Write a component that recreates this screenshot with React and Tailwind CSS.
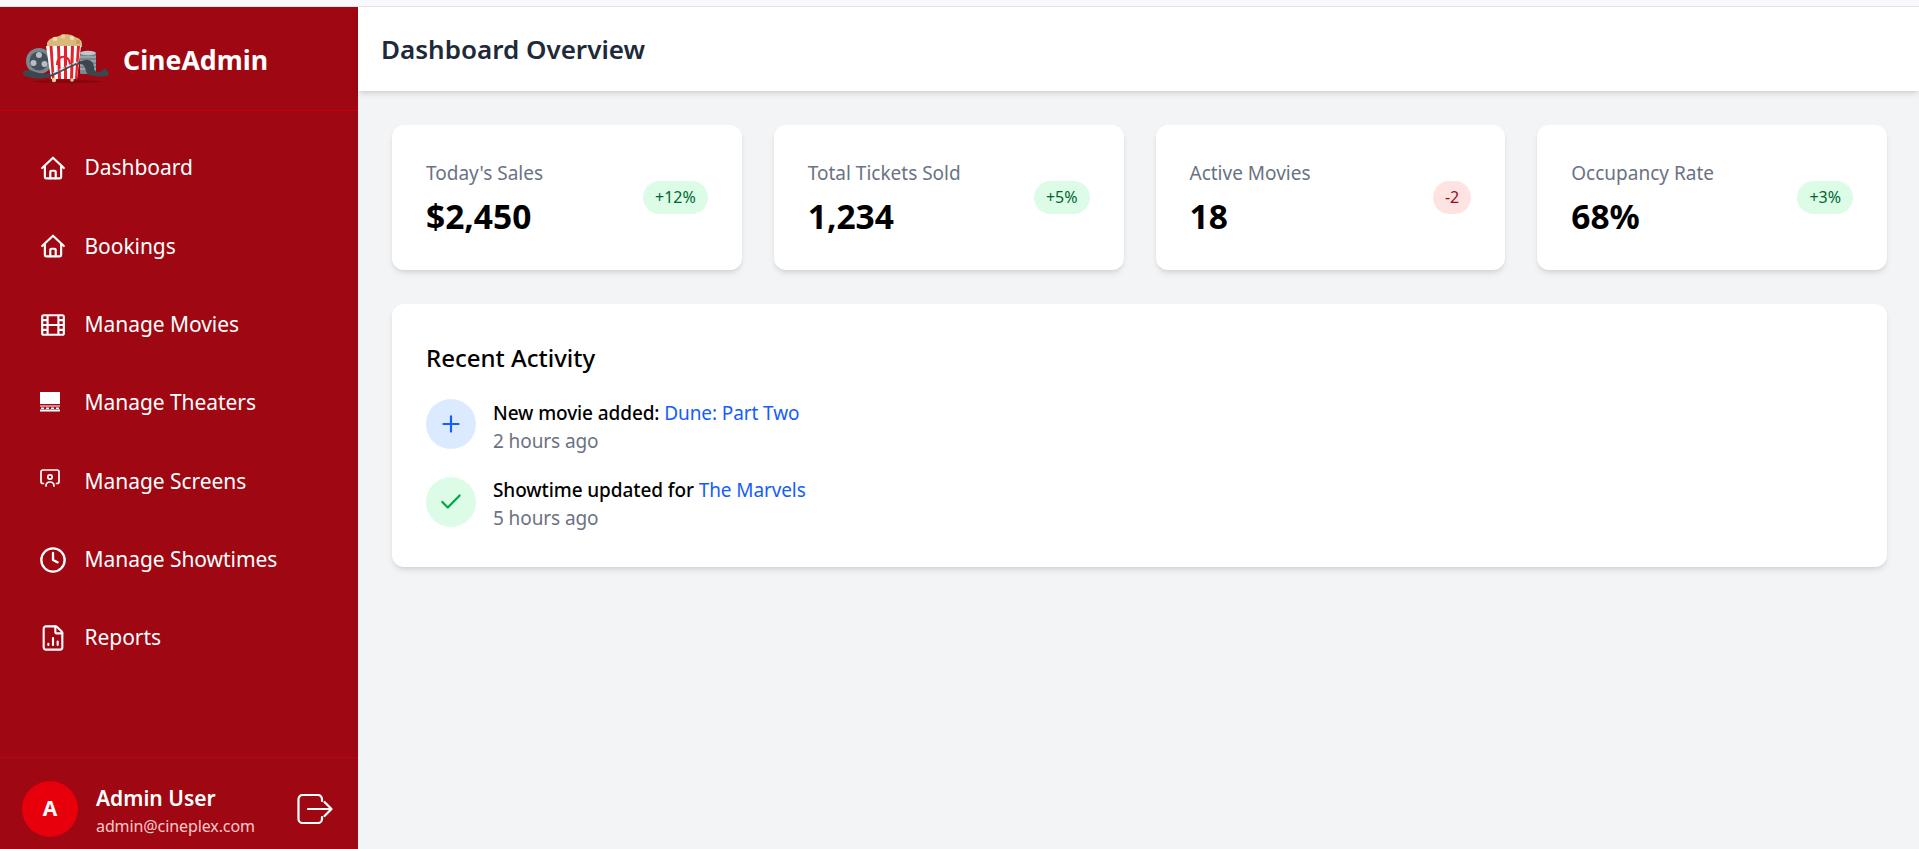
import { Clock, FileChartColumn, Plus, Check } from 'lucide-react';

const font = { fontFamily: '"Noto Sans", "Open Sans", sans-serif' };

const HomeIcon = () => (
  <svg viewBox="0 0 24 24" className="w-[26px] h-[26px]" fill="none" stroke="currentColor" strokeWidth="2" strokeLinecap="round" strokeLinejoin="round">
    <path d="M2 12 12 2.5 22 12" />
    <path d="M4.5 10v10a1.5 1.5 0 0 0 1.5 1.5h12a1.5 1.5 0 0 0 1.5-1.5V10" />
    <path d="M9.5 21.5V15.5a1 1 0 0 1 1-1h3a1 1 0 0 1 1 1v6" />
  </svg>
);

const FilmIcon = () => (
  <svg viewBox="0 0 24 24" className="w-[26px] h-[26px]" fill="none" stroke="currentColor" strokeWidth="2" strokeLinejoin="round">
    <rect x="2" y="3" width="20" height="18" rx="1.5" />
    <path d="M7 3v18M17 3v18M7 12h10M2 7.5h5M2 12h5M2 16.5h5M17 7.5h5M17 12h5M17 16.5h5" />
  </svg>
);

const TheaterIcon = () => (
  <svg viewBox="3 -2 26 26" className="w-[26px] h-[26px]" fill="white">
    <rect x="3" y="0" width="20" height="12" />
    <rect x="3" y="13.5" width="20" height="1" />
    <path d="M4 15.5h3v1.5H4zM9 15.5h3v1.5H9zM14 15.5h3v1.5h-3zM19 15.5h3v1.5h-3z" />
    <rect x="3" y="17.5" width="20" height="2" />
  </svg>
);

const ScreenIcon = () => (
  <svg viewBox="3 0 26 26" className="w-[26px] h-[26px]" fill="none" stroke="currentColor" strokeWidth="1.7" strokeLinecap="round" strokeLinejoin="round">
    <path d="M6.500 15.500H6a2 2 0 0 1-2-2V4a2 2 0 0 1 2-2h14a2 2 0 0 1 2 2v9.500a2 2 0 0 1-2 2h-.5" />
    <circle cx="13" cy="9" r="2.200" />
    <path d="M9 18c0-2.600 1.600-4 4-4s4 1.400 4 4" />
  </svg>
);

const LogoutIcon = () => (
  <svg viewBox="0 0 36 30" className="w-9 h-[30px] shrink-0" fill="none" stroke="currentColor" strokeWidth="2.2" strokeLinecap="round" strokeLinejoin="round">
    <path d="M25 7V5a4 4 0 0 0-4-4H5.500a4 4 0 0 0-4 4v20a4 4 0 0 0 4 4H21a4 4 0 0 0 4-4v-2" />
    <path d="M11 15h23.500M27.500 8l7 7-7 7" />
  </svg>
);

// small picture of a film reel, popcorn box and film strip
const Logo = () => (
  <svg viewBox="0 0 88 50" className="w-[88px] h-[50px] shrink-0">
    <ellipse cx="45" cy="47.500" rx="34" ry="1.500" fill="#85060f" />
    <circle cx="17" cy="27" r="13" fill="#7b868f" />
    <circle cx="17" cy="27" r="9.500" fill="#465058" />
    <circle cx="17" cy="21" r="3" fill="#b6bfc7" />
    <circle cx="11.500" cy="29" r="3" fill="#b6bfc7" />
    <circle cx="22.500" cy="30" r="3" fill="#b6bfc7" />
    <rect x="58" y="19" width="16" height="21" rx="1.500" fill="#7b868f" />
    <path d="M58 23h16M58 27h16M58 31h16M58 35h16" stroke="#b6bfc7" strokeWidth="1" />
    <ellipse cx="66" cy="19" rx="8" ry="2.200" fill="#c0c8cf" />
    <path d="M25 9 C27 4 33 3 37 2 C42 -1 50 0 53 3 C57 4 60 6 60 10 L60 13 L25 13Z" fill="#d9b87c" />
    <circle cx="33" cy="5" r="2.200" fill="#efdcae" />
    <circle cx="41" cy="2.500" r="2.300" fill="#e8cf98" />
    <circle cx="50" cy="4" r="2.200" fill="#efdcae" />
    <circle cx="56" cy="8" r="2" fill="#c89e5c" />
    <path d="M24 12h35l-4 33H29Z" fill="#fff" />
    <path d="M27.500 12h3l2 33h-2.500ZM35 12h3l1 33h-3ZM42 12h3v33h-3ZM49 12h3l-1 33h-3ZM55 12h3l-3 33h-2Z" fill="#e3222b" />
    <path d="M35 31c0-11 13-11 13 0" fill="none" stroke="#e3222b" strokeWidth="2.200" />
    <path d="M1 37c-1 3 1 5 5 6 7 2 14 2 22 0 9-3 20-11 30-13 4 0 5 3 6 7 1 4 4 5 9 5 5 1 10 1 14-1l-1-4-4-3c-1 2-3 4-6 4-2 0-4-1-4-4 0-5-3-9-9-8-11 2-21 10-31 13-9 2-17 0-24-3Z" fill="#3d464d" />
    <path d="M28 40c9-3 19-10 29-12" fill="none" stroke="#c0c8cf" strokeWidth="1.800" strokeDasharray="2 1.500" />
    <circle cx="32" cy="46" r="2.200" fill="#e8cf98" />
    <circle cx="50" cy="46" r="1.800" fill="#e8cf98" />
  </svg>
);

const navItems = [
  { label: 'Dashboard', icon: <HomeIcon /> },
  { label: 'Bookings', icon: <HomeIcon /> },
  { label: 'Manage Movies', icon: <FilmIcon /> },
  { label: 'Manage Theaters', icon: <TheaterIcon /> },
  { label: 'Manage Screens', icon: <ScreenIcon /> },
  { label: 'Manage Showtimes', icon: <Clock className="w-[28px] h-[28px] -ml-px" strokeWidth={2} /> },
  { label: 'Reports', icon: <FileChartColumn className="w-[28px] h-[28px] -ml-px" strokeWidth={1.800} /> },
];

const stats = [
  { title: "Today's Sales", value: '$2,450', change: '+12%', up: true },
  { title: 'Total Tickets Sold', value: '1,234', change: '+5%', up: true },
  { title: 'Active Movies', value: '18', change: '-2', up: false },
  { title: 'Occupancy Rate', value: '68%', change: '+3%', up: true },
];

const App = () => {
  return (
    <div style={font} className="h-[849px] overflow-hidden bg-[#f3f4f6] flex flex-col">
      <div className="h-[7px] shrink-0 bg-[#f8f8ff] border-b border-[#e2e2ea]" />
      <div className="flex flex-1 min-h-0">
        <aside className="w-[358px] shrink-0 bg-[#9f0712] text-white flex flex-col">
          <div className="h-[104px] shrink-0 flex items-center pl-[22px] gap-[13px] border-b border-[#c70008]">
            <Logo />
            <span className="mt-[4px] text-[26.700px] font-bold">CineAdmin</span>
          </div>
          <nav className="flex-1 pt-[18px]">
            {navItems.map((item) => (
              <a key={item.label} href="#" className="flex items-center h-[78.300px]">
                <span className="w-[84.500px] shrink-0 flex pl-[40px]">{item.icon}</span>
                <span className="text-[21px] tracking-[-0.05px]">{item.label}</span>
              </a>
            ))}
          </nav>
          <div className="h-[92px] shrink-0 border-t border-[#b8070f] flex items-start pt-[23px] pl-[22px] pr-[25px]">
            <div className="w-14 h-14 shrink-0 rounded-full bg-[#e7000b] flex items-center justify-center text-[21px] font-bold">A</div>
            <div className="ml-[18px] flex-1 mt-[3px]">
              <div className="text-[21px] font-semibold leading-7">Admin User</div>
              <div className="text-[16px] leading-6 mt-[2px] text-[#ffc9c9] tracking-[-0.1px]">admin@cineplex.com</div>
            </div>
            <div className="mt-[13px]"><LogoutIcon /></div>
          </div>
        </aside>
        <div className="flex-1 min-w-0">
          <header className="h-[84px] bg-white shadow-md flex items-center pl-[23px]">
            <h1 className="text-[26px] font-semibold text-[#1e2939]">Dashboard Overview</h1>
          </header>
          <main className="pt-[34px] pl-[34px] pr-[32px]">
            <div className="grid grid-cols-4 gap-[32px]">
              {stats.map((s) => (
                <div key={s.title} className="bg-white rounded-xl shadow-md h-[145px] px-[34px] flex items-center justify-between">
                  <div>
                    <p className="text-[19px] leading-7 text-[#6a7282]">{s.title}</p>
                    <p className="text-[33.500px] leading-10 mt-[9px] font-bold text-black">{s.value}</p>
                  </div>
                  <span className={`text-[16px] leading-[33px] h-[33px] px-[12px] rounded-full ${s.up ? 'bg-[#dcfce7] text-[#016630]' : 'bg-[#ffe2e2] text-[#9f0712]'}`}>{s.change}</span>
                </div>
              ))}
            </div>
            <section className="mt-[34px] bg-white rounded-xl shadow-md h-[263px] px-[34px] pt-[38px]">
              <h2 className="text-[24px] leading-8 font-medium text-black">Recent Activity</h2>
              <div className="mt-[25px] flex flex-col gap-[21px]">
                <div className="flex items-start gap-[17px]">
                  <div className="w-[50px] h-[50px] rounded-full bg-[#dbeafe] flex items-center justify-center text-[#155dfc]">
                    <Plus className="w-[26px] h-[26px]" strokeWidth={2} />
                  </div>
                  <div>
                    <p className="text-[19px] leading-7 font-medium text-black tracking-[-0.1px]">New movie added: <span className="font-normal text-[#155dfc]">Dune: Part Two</span></p>
                    <p className="text-[19px] leading-7 text-[#6a7282] tracking-[-0.1px]">2 hours ago</p>
                  </div>
                </div>
                <div className="flex items-start gap-[17px]">
                  <div className="w-[50px] h-[50px] mt-[1px] rounded-full bg-[#dcfce7] flex items-center justify-center text-[#00a63e]">
                    <Check className="w-[26px] h-[26px]" strokeWidth={2} />
                  </div>
                  <div>
                    <p className="text-[19px] leading-7 font-medium text-black tracking-[-0.1px]">Showtime updated for <span className="font-normal text-[#155dfc]">The Marvels</span></p>
                    <p className="text-[19px] leading-7 text-[#6a7282] tracking-[-0.1px]">5 hours ago</p>
                  </div>
                </div>
              </div>
            </section>
          </main>
        </div>
      </div>
    </div>
  );
};

export default App;
